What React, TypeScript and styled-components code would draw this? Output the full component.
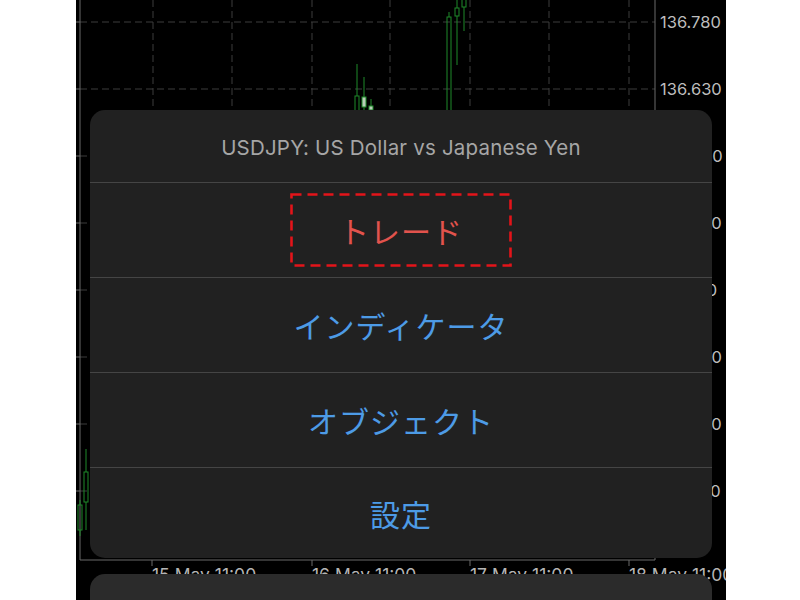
import { FC } from "react";
import styled, { createGlobalStyle } from "styled-components";

const GlobalStyle = createGlobalStyle`
  html, body {
    margin: 0;
    padding: 0;
    background: #ffffff;
  }
  body {
    font-family: "Inter", "Noto Sans", "Noto Sans CJK JP", sans-serif;
  }
`;

const Screen = styled.div`
  position: relative;
  width: 650px;
  height: 600px;
  margin-left: 76px;
  background: #000;
  overflow: hidden;
`;

const Chart = styled.svg`
  display: block;
  width: 650px;
  height: 600px;
`;

const Sheet = styled.div<{ $top: number; $tone: string; $height: number }>`
  position: absolute;
  left: 14px;
  top: ${(p) => p.$top}px;
  width: 622px;
  height: ${(p) => p.$height}px;
  border-radius: 15px;
  background: ${(p) => p.$tone};
  display: flex;
  flex-direction: column;
  overflow: hidden;
`;

const Title = styled.div`
  height: 72px;
  display: flex;
  align-items: center;
  justify-content: center;
  padding-top: 2px;
  box-sizing: border-box;
  color: #a6a6a6;
  font-size: 20.5px;
  letter-spacing: 0.2px;
`;

const Action = styled.div<{ $danger?: boolean; $last?: boolean }>`
  position: relative;
  box-sizing: border-box;
  height: ${(p) => (p.$last ? "auto" : "95px")};
  flex: ${(p) => (p.$last ? 1 : "none")};
  border-top: 1px solid #454545;
  display: flex;
  align-items: center;
  justify-content: center;
  font-family: "Noto Sans CJK JP", "Noto Sans", sans-serif;
  font-size: 30px;
  letter-spacing: 1px;
  color: ${(p) => (p.$danger ? "#e2534d" : "#4d9be6")};
`;

const Highlight = styled.svg`
  position: absolute;
  left: 50%;
  top: 10px;
  width: 222px;
  height: 74px;
  transform: translateX(-50%);
`;

const gridX = [77, 156, 236, 314, 394, 473, 553];
const gridY = [22, 89, 156, 223, 290, 357, 424, 491];
const prices = ["136.780", "136.630", "136.480", "136.330", "136.180", "136.030", "135.880", "135.730"];
const times = [
  { x: 76, label: "15 May 11:00" },
  { x: 236, label: "16 May 11:00" },
  { x: 394, label: "17 May 11:00" },
  { x: 553, label: "18 May 11:00" },
];

interface Candle {
  x: number;
  wickTop: number;
  wickBottom: number;
  bodyTop: number;
  bodyBottom: number;
  filled?: boolean;
}

const candles: Candle[] = [
  { x: 281, wickTop: 64, wickBottom: 112, bodyTop: 96, bodyBottom: 112 },
  { x: 288, wickTop: 77, wickBottom: 110, bodyTop: 97, bodyBottom: 107, filled: true },
  { x: 295, wickTop: 99, wickBottom: 110, bodyTop: 106, bodyBottom: 110, filled: true },
  { x: 373, wickTop: 12, wickBottom: 112, bodyTop: 17, bodyBottom: 112 },
  { x: 381, wickTop: 0, wickBottom: 65, bodyTop: 8, bodyBottom: 16 },
  { x: 388, wickTop: 0, wickBottom: 31, bodyTop: -2, bodyBottom: 7 },
  { x: 10, wickTop: 449, wickBottom: 530, bodyTop: 472, bodyBottom: 502 },
  { x: 4, wickTop: 500, wickBottom: 536, bodyTop: 505, bodyBottom: 530 },
];

const actions = ["トレード", "インディケータ", "オブジェクト", "設定"];

const App: FC = () => {
  return (
    <>
      <GlobalStyle />
      <Screen>
        <Chart viewBox="0 0 650 600">
          {gridY.map((y) => (
            <line key={`h${y}`} x1={4} x2={579} y1={y} y2={y} stroke="#3c3c3c" strokeDasharray="7 4" />
          ))}
          {gridX.map((x) => (
            <line key={`v${x}`} x1={x} x2={x} y1={0} y2={560} stroke="#3c3c3c" strokeDasharray="7 4" />
          ))}
          <line x1={4} x2={4} y1={0} y2={560} stroke="#6a6a6a" />
          <line x1={579} x2={579} y1={0} y2={560} stroke="#6a6a6a" />
          <line x1={4} x2={579} y1={560} y2={560} stroke="#6a6a6a" />
          {gridY.map((y) => (
            <line key={`t${y}`} x1={0} x2={4} y1={y} y2={y} stroke="#6a6a6a" />
          ))}
          {candles.map((c) => (
            <g key={`${c.x}-${c.wickTop}`}>
              <line x1={c.x} x2={c.x} y1={c.wickTop} y2={c.bodyTop} stroke="#1f8a2a" />
              <line x1={c.x} x2={c.x} y1={c.bodyBottom} y2={c.wickBottom} stroke="#1f8a2a" />
              <rect
                x={c.x - 2}
                y={c.bodyTop}
                width={4}
                height={c.bodyBottom - c.bodyTop}
                fill={c.filled ? "#b9cdb9" : "none"}
                stroke="#1f8a2a"
              />
            </g>
          ))}
          {prices.map((p, i) => (
            <text
              key={p}
              x={584}
              y={gridY[i] + 6}
              fill="#bdbdbd"
              fontSize={16.5}
              fontFamily="Inter, 'Noto Sans', sans-serif"
            >
              {p}
            </text>
          ))}
          {times.map((t) => (
            <g key={t.label}>
              <line x1={t.x} x2={t.x} y1={560} y2={566} stroke="#6a6a6a" />
              <text x={t.x} y={581} fill="#b5b5b5" fontSize={17.5} fontFamily="Inter, 'Noto Sans', sans-serif">
                {t.label}
              </text>
            </g>
          ))}
        </Chart>

        <Sheet $top={110} $height={448} $tone="#212121">
          <Title>USDJPY: US Dollar vs Japanese Yen</Title>
          {actions.map((a, i) => (
            <Action key={a} $danger={i === 0} $last={i === actions.length - 1}>
              {a}
              {i === 0 && (
                <Highlight viewBox="0 0 222 74">
                  <rect
                    x={1.5}
                    y={1.5}
                    width={219}
                    height={71}
                    fill="none"
                    stroke="#e3141a"
                    strokeWidth={2.6}
                    strokeDasharray="10 6"
                  />
                </Highlight>
              )}
            </Action>
          ))}
        </Sheet>

        <Sheet $top={574} $height={60} $tone="#2b2b2b" />
      </Screen>
    </>
  );
};

export default App;
